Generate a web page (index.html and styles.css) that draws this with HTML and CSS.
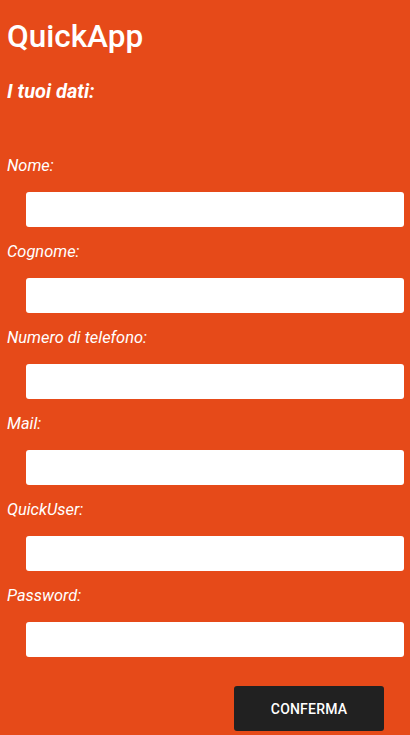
FILE: index.html
```html
<!DOCTYPE html>
<html lang="it">
<head>
  <meta charset="UTF-8" />
  <meta name="viewport" content="width=device-width, initial-scale=1" />
  <title>QuickApp</title>
  <link rel="stylesheet" href="styles.css">
</head>
<body>
  <div class="page">
    <h1 class="app-title">QuickApp</h1>
    <h2 class="subtitle">I tuoi dati:</h2>

    <form class="data-form">
      <div class="field">
        <label for="nome">Nome:</label>
        <input type="text" id="nome" />
      </div>
      <div class="field">
        <label for="cognome">Cognome:</label>
        <input type="text" id="cognome" />
      </div>
      <div class="field">
        <label for="telefono">Numero di telefono:</label>
        <input type="tel" id="telefono" />
      </div>
      <div class="field">
        <label for="mail">Mail:</label>
        <input type="email" id="mail" />
      </div>
      <div class="field">
        <label for="quickuser">QuickUser:</label>
        <input type="text" id="quickuser" />
      </div>
      <div class="field">
        <label for="password">Password:</label>
        <input type="password" id="password" />
      </div>

      <div class="actions">
        <button type="button" class="btn-confirm">CONFERMA</button>
      </div>
    </form>
  </div>
</body>
</html>
```

FILE: styles.css
```css
* {
  margin: 0;
  padding: 0;
  box-sizing: border-box;
  font-family: Roboto, 'Liberation Sans', sans-serif;
}

body {
  background-color: #e64a19;
  color: #fff;
}

.page {
  padding: 19px 6px 20px 7px;
}

/* Titoli */
.app-title {
  font-size: 31.5px;
  line-height: 36px;
  font-weight: 500;
}

.subtitle {
  margin-top: 24px;
  font-size: 20px;
  line-height: 24px;
  font-weight: 700;
  font-style: italic;
}

/* Form */
.data-form {
  margin-top: 53px;
}

.field {
  display: flex;
  flex-direction: column;
  margin-bottom: 15px;
}

.field label {
  font-size: 16.4px;
  line-height: 20px;
  font-style: italic;
}

.field input {
  margin: 16px 0 0 19px;
  height: 35px;
  border: none;
  border-radius: 3px;
  background: #fff;
  padding: 0 10px;
  font-size: 16px;
}

.actions {
  display: flex;
  justify-content: flex-end;
  padding: 14px 20px 0 0;
}

.btn-confirm {
  width: 150px;
  height: 45px;
  border: none;
  border-radius: 3px;
  background-color: #212121;
  color: #fff;
  font-size: 14px;
  font-weight: 500;
  letter-spacing: 0.2px;
  cursor: pointer;
}
```
